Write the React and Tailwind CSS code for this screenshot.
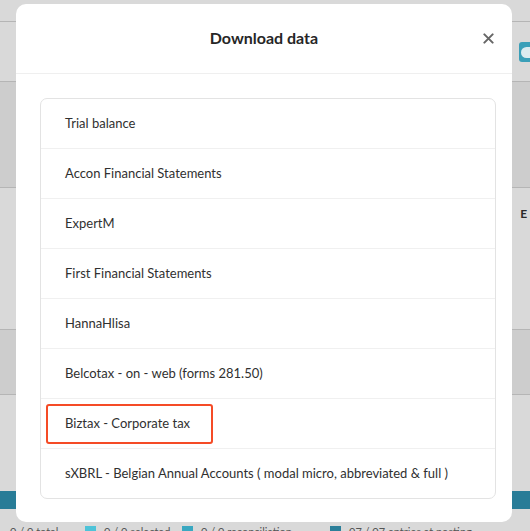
import React from "react";

const exportTypes = [
  "Trial balance",
  "Accon Financial Statements",
  "ExpertM",
  "First Financial Statements",
  "HannaHlisa",
  "Belcotax - on - web (forms 281.50)",
  "Biztax - Corporate tax",
  "sXBRL - Belgian Annual Accounts ( modal micro, abbreviated & full )",
];

function Backdrop() {
  return (
    <div className="h-[531px] bg-[#d9d9d9] overflow-hidden">
      <div className="h-[22px] border-b border-[#b5b5b5]" />
      <div className="h-[60px] border-b border-[#b5b5b5] flex justify-end items-start pt-[20px]">
        <div className="w-[11px] h-[20px] bg-[#3a9fb8] rounded-l-[3px] flex items-center pl-[2px]">
          <div className="w-[9px] h-[11px] rounded-l-full bg-[#dcebef]" />
        </div>
      </div>
      <div className="h-[106px] bg-[#cdcdcd] border-b border-[#b5b5b5]" />
      <div className="h-[142px] border-b border-[#b5b5b5] flex justify-end pt-[20px] -mr-[3px]">
        <span className="text-[12px] font-bold text-[#2a2a2a] leading-none">E .</span>
      </div>
      <div className="h-[65px] bg-[#cdcdcd] border-b border-[#b5b5b5]" />
      <div className="h-[96px]" />
      <div className="h-[18px] bg-[#287c97]" />
      <div className="flex items-start pl-[10px] pt-[17px] text-[11px] text-[#555] leading-none">
        <span className="w-[75px]">0 / 0 total</span>
        <span className="flex gap-[8px] w-[97px]"><i className="w-[11px] h-[11px] bg-[#4ec3d8]" />0 / 0 selected</span>
        <span className="flex gap-[8px] w-[148px]"><i className="w-[11px] h-[11px] bg-[#3aa8c1]" />0 / 0 reconciliation</span>
        <span className="flex gap-[8px]"><i className="w-[11px] h-[11px] bg-[#2c7f99]" />07 / 07 entries at posting</span>
      </div>
    </div>
  );
}

export default function App() {
  return (
    <div className="relative w-[530px] h-[531px] overflow-hidden font-['Lato','Open_Sans',sans-serif]">
      <Backdrop />

      <div className="absolute left-[16px] top-[4px] w-[496px] h-[518px] bg-white rounded-[10px] flex flex-col">
        <div className="h-[70px] border-b border-[#efefef] flex items-center justify-center relative">
          <h2 className="text-[16px] font-bold text-[#262626] -mt-[2px]">Download data</h2>
          <button className="absolute right-[18px] top-[29px] w-[11px] h-[11px] text-[#666]">
            <svg viewBox="0 0 12 12" className="w-[11px] h-[11px]">
              <path d="M1.5 1.5 L10.5 10.5 M10.5 1.5 L1.5 10.5" stroke="currentColor" strokeWidth="2.2" strokeLinecap="round" />
            </svg>
          </button>
        </div>

        <div className="pl-[24px] pr-[16px] pt-[24px]">
          <ul className="border border-[#e3e3e3] rounded-[7px]">
            {exportTypes.map((label, i) => (
              <li
                key={label}
                className={`relative flex items-center pl-[24px] text-[13px] text-[#303030] ${
                  i > 0 ? "h-[50px] border-t border-[#f0f0f0]" : "h-[49px]"
                }`}
              >
                {label}
                {label === "Biztax - Corporate tax" && (
                  <span className="absolute left-[5px] top-[5px] w-[167px] h-[40px] border-2 border-[#f54b26] rounded-[3px]" />
                )}
              </li>
            ))}
          </ul>
        </div>
      </div>
    </div>
  );
}
